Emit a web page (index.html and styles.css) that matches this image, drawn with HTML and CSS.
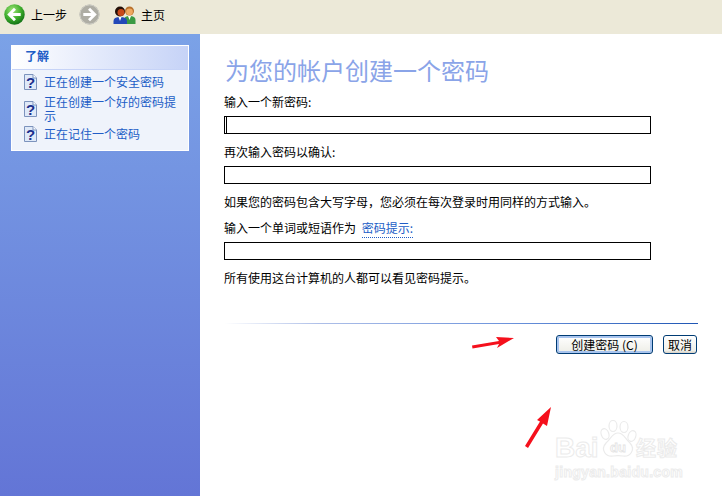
FILE: index.html
```html
<!DOCTYPE html>
<html lang="zh-CN">
<head>
<meta charset="utf-8">
<title>为您的帐户创建一个密码</title>
<link rel="stylesheet" href="styles.css">
</head>
<body>
<div class="page">
  <header class="toolbar">
    <svg class="nav-icon" viewBox="0 0 22 22"><defs><radialGradient id="g" cx=".4" cy=".3" r=".75"><stop offset="0" stop-color="#a2e67a"/><stop offset=".55" stop-color="#3fae2c"/><stop offset="1" stop-color="#0b6a12"/></radialGradient></defs><circle cx="11" cy="11" r="10.700" fill="url(#g)"/><path d="M11.500 5 L5.500 11 L11.500 17 M6.500 11 H17.500" fill="none" stroke="#fff" stroke-width="3"/></svg>
    <span class="tool-label back-label">上一步</span>
    <svg class="nav-icon fwd" viewBox="0 0 22 22"><circle cx="11" cy="11" r="10.500" fill="#aeada4"/><circle cx="11" cy="11" r="10" fill="none" stroke="#cfcec5" stroke-width="1"/><path d="M10.500 5 L16.500 11 L10.500 17 M15.500 11 H4.500" fill="none" stroke="#fff" stroke-width="3"/></svg>
    <svg class="home-icon" viewBox="0 0 24 18"><circle cx="16.500" cy="5" r="4.500" fill="#b8702a"/><circle cx="16.500" cy="5.800" r="3.400" fill="#f0a860"/><path d="M11 18 V14 Q11 10 16.500 10 Q22.500 10 22.500 14 V18Z" fill="#3a9a44"/><path d="M15 10 L16.500 14 L18 10Z" fill="#fff"/><circle cx="7" cy="5.500" r="5" fill="#241008"/><circle cx="8" cy="6.500" r="3.500" fill="#c8481a"/><path d="M.5 18 V15 Q.5 11 7 11 Q14 11 14 15 V18Z" fill="#2348b8"/><path d="M5.500 11 L7 15 L8.500 11Z" fill="#fff"/></svg>
    <span class="tool-label">主页</span>
  </header>
  <div class="body">
    <aside class="sidebar">
      <section class="panel">
        <h2 class="panel-title">了解</h2>
        <ul class="panel-list">
          <li class="panel-item"><svg class="help" viewBox="0 0 13 16"><path d="M.5.5H9L12.500 4V15.500H.5Z" fill="#dfe9f8" stroke="#7c93bd"/><path d="M9 .5V4H12.500" fill="#fff" stroke="#7c93bd"/><text x="6.500" y="13.500" class="help-q">?</text></svg><span>正在创建一个安全密码</span></li>
          <li class="panel-item multi"><svg class="help" viewBox="0 0 13 16"><path d="M.5.5H9L12.500 4V15.500H.5Z" fill="#dfe9f8" stroke="#7c93bd"/><path d="M9 .5V4H12.500" fill="#fff" stroke="#7c93bd"/><text x="6.500" y="13.500" class="help-q">?</text></svg><span>正在创建一个好的密码提示</span></li>
          <li class="panel-item"><svg class="help" viewBox="0 0 13 16"><path d="M.5.5H9L12.500 4V15.500H.5Z" fill="#dfe9f8" stroke="#7c93bd"/><path d="M9 .5V4H12.500" fill="#fff" stroke="#7c93bd"/><text x="6.500" y="13.500" class="help-q">?</text></svg><span>正在记住一个密码</span></li>
        </ul>
      </section>
    </aside>
    <main class="content">
      <h1 class="title">为您的帐户创建一个密码</h1>
      <label class="label l1">输入一个新密码:</label>
      <div class="field caret"></div>
      <label class="label l2">再次输入密码以确认:</label>
      <div class="field"></div>
      <p class="label l3">如果您的密码包含大写字母，您必须在每次登录时用同样的方式输入。</p>
      <label class="label l4">输入一个单词或短语作为 <a class="hint">密码提示:</a></label>
      <div class="field"></div>
      <p class="label l5">所有使用这台计算机的人都可以看见密码提示。</p>
      <div class="rule"></div>
      <div class="actions">
        <button class="btn primary">创建密码 (C)</button>
        <button class="btn">取消</button>
      </div>
    </main>
  </div>
  <svg class="arrows" viewBox="0 0 722 496">
    <path d="M472 345.500 L499 341 L496 337 L514 338 L497 348 L499 344 L472.500 348.500Z" fill="#f5101c"/>
    <path d="M525 446 L540 421.500 L537 420 L551 407 L547 426 L543 423.500 L528 448Z" fill="#f5101c"/>
  </svg>
  <div class="watermark">
    <div class="wm-top">
      <span class="wm-bai">Bai</span>
      <svg class="wm-paw" viewBox="0 0 38 40"><g class="wm-shape"><ellipse cx="6" cy="14" rx="3.800" ry="5.500" transform="rotate(-20 6 14)"/><ellipse cx="14" cy="6" rx="4" ry="5.500"/><ellipse cx="25" cy="7" rx="4" ry="5.500"/><ellipse cx="33" cy="16" rx="3.800" ry="5.500" transform="rotate(20 33 16)"/><path d="M19 13 C25 13 26 19 31 23 C37 30 31 37 24 36 C20 35.500 18 35.500 14 36 C7 37 1 30 7 23 C12 19 13 13 19 13Z"/></g><text x="19" y="32" class="wm-du">du</text></svg>
      <span class="wm-cn">经验</span>
    </div>
    <div class="wm-url">jingyan.baidu.com</div>
  </div>
</div>
</body>
</html>
```
FILE: styles.css
```css
* { box-sizing: border-box; }
html, body { margin: 0; padding: 0; background: #fff; }
body { font-family: "Noto Sans CJK SC", "Liberation Sans", sans-serif; font-size: 12px; color: #000; }
.page { position: relative; width: 722px; height: 496px; overflow: hidden; display: flex; flex-direction: column; }
.toolbar { height: 34px; flex: none; background: #ece9d8; display: flex; align-items: center; padding: 0 0 5px 4px; }
.nav-icon { width: 21px; height: 21px; flex: none; }
.tool-label { font-size: 12px; line-height: 16px; }
.back-label { margin-left: 6px; width: 42px; }
.fwd { margin-left: 6px; }
.home-icon { width: 24px; height: 18px; margin-left: 13px; margin-right: 4px; flex: none; }
.body { flex: 1; display: flex; min-height: 0; }
.sidebar { width: 200px; flex: none; background: linear-gradient(#7ba2e7, #6375d6); padding: 11px; }
.panel { width: 178px; height: 106px; border: 1px solid #fff; background: #eff3fb; }
.panel-title { margin: 0; height: 24px; padding: 1px 0 0 13px; font-size: 12px; line-height: 18px; font-weight: 700; color: #215dc6; background: linear-gradient(90deg, #fff, #c6d3f7); border-bottom: 1px solid #c6d3f7; }
.panel-list { list-style: none; margin: 0; padding: 4px 8px 0 12px; display: flex; flex-direction: column; gap: 3px; }
.panel-item { display: flex; align-items: center; gap: 7px; color: #215dc6; font-size: 12px; line-height: 14px; }
.panel-item span { flex: 1; }
.multi { padding-top: 2px; }
.help { width: 13px; height: 16px; flex: none; }
.help-q { font: 700 15px "Liberation Sans", sans-serif; fill: #1c2f8c; text-anchor: middle; }
.content { flex: 1; padding: 19px 25px 0 24px; display: flex; flex-direction: column; }
.title { margin: 0 0 0 1px; font-size: 24px; line-height: 34px; font-weight: 400; color: #8aa4e8; }
.label { display: block; margin: 0; font-size: 12px; line-height: 16px; height: 16px; }
.l1 { margin-top: 7px; height: 17px; }
.l2 { margin-top: 10px; height: 17px; }
.l3 { margin-top: 10px; }
.l4 { margin-top: 10px; height: 17px; }
.l5 { margin-top: 10px; }
.field { width: 427px; height: 18px; margin-top: 5px; border: 1px solid #000; background: #fff; flex: none; }
.caret { border-left: 1px solid #000; box-shadow: inset 1px 0 0 #fff, inset 2px 0 0 #000; }
.hint { color: #215dc6; border-bottom: 1px dotted #215dc6; margin-left: 3px; padding-bottom: 1px; }
.rule { height: 1px; margin: 37px -1px 0 0; background: linear-gradient(90deg, #fff, #aebfe8 20%, #6c93dc 60%, #1f56b4); }
.actions { margin-top: 11px; display: flex; justify-content: flex-end; gap: 10px; }
.btn { height: 19px; padding: 0; width: 34px; font: 12px/15px "Noto Sans CJK SC", sans-serif; color: #000; border: 1px solid #003c74; border-radius: 3px; background: linear-gradient(#fff, #f0f0ea 85%, #d6d0c5); }
.primary { width: 97px; box-shadow: inset 0 0 0 2px #a8c4ee; }
.arrows { position: absolute; inset: 0; width: 722px; height: 496px; pointer-events: none; }
.watermark { position: absolute; left: 555px; top: 420px; width: 130px; }
.wm-top { display: flex; align-items: flex-end; height: 40px; color: #fff; font-family: "Liberation Sans", sans-serif; font-weight: 700; }
.wm-bai { width: 44px; font-size: 28px; line-height: 24px; -webkit-text-stroke: 1px #ebebeb; }
.wm-paw { width: 38px; height: 40px; flex: none; margin-top: -6px; }
.wm-shape { fill: #fff; stroke: #ebebeb; stroke-width: 1.200; }
.wm-du { font: 700 13px "Liberation Sans", sans-serif; fill: #fff; stroke: #e4e4e4; stroke-width: .8px; text-anchor: middle; }
.wm-cn { font-family: "Noto Sans CJK SC", sans-serif; font-size: 20px; line-height: 24px; margin-left: -1px; -webkit-text-stroke: 1px #ebebeb; letter-spacing: 1px; }
.wm-url { margin-top: 4px; color: #fff; font: 700 14px/16px "Liberation Sans", sans-serif; -webkit-text-stroke: 1px #ececec; letter-spacing: .3px; white-space: nowrap; }
```
